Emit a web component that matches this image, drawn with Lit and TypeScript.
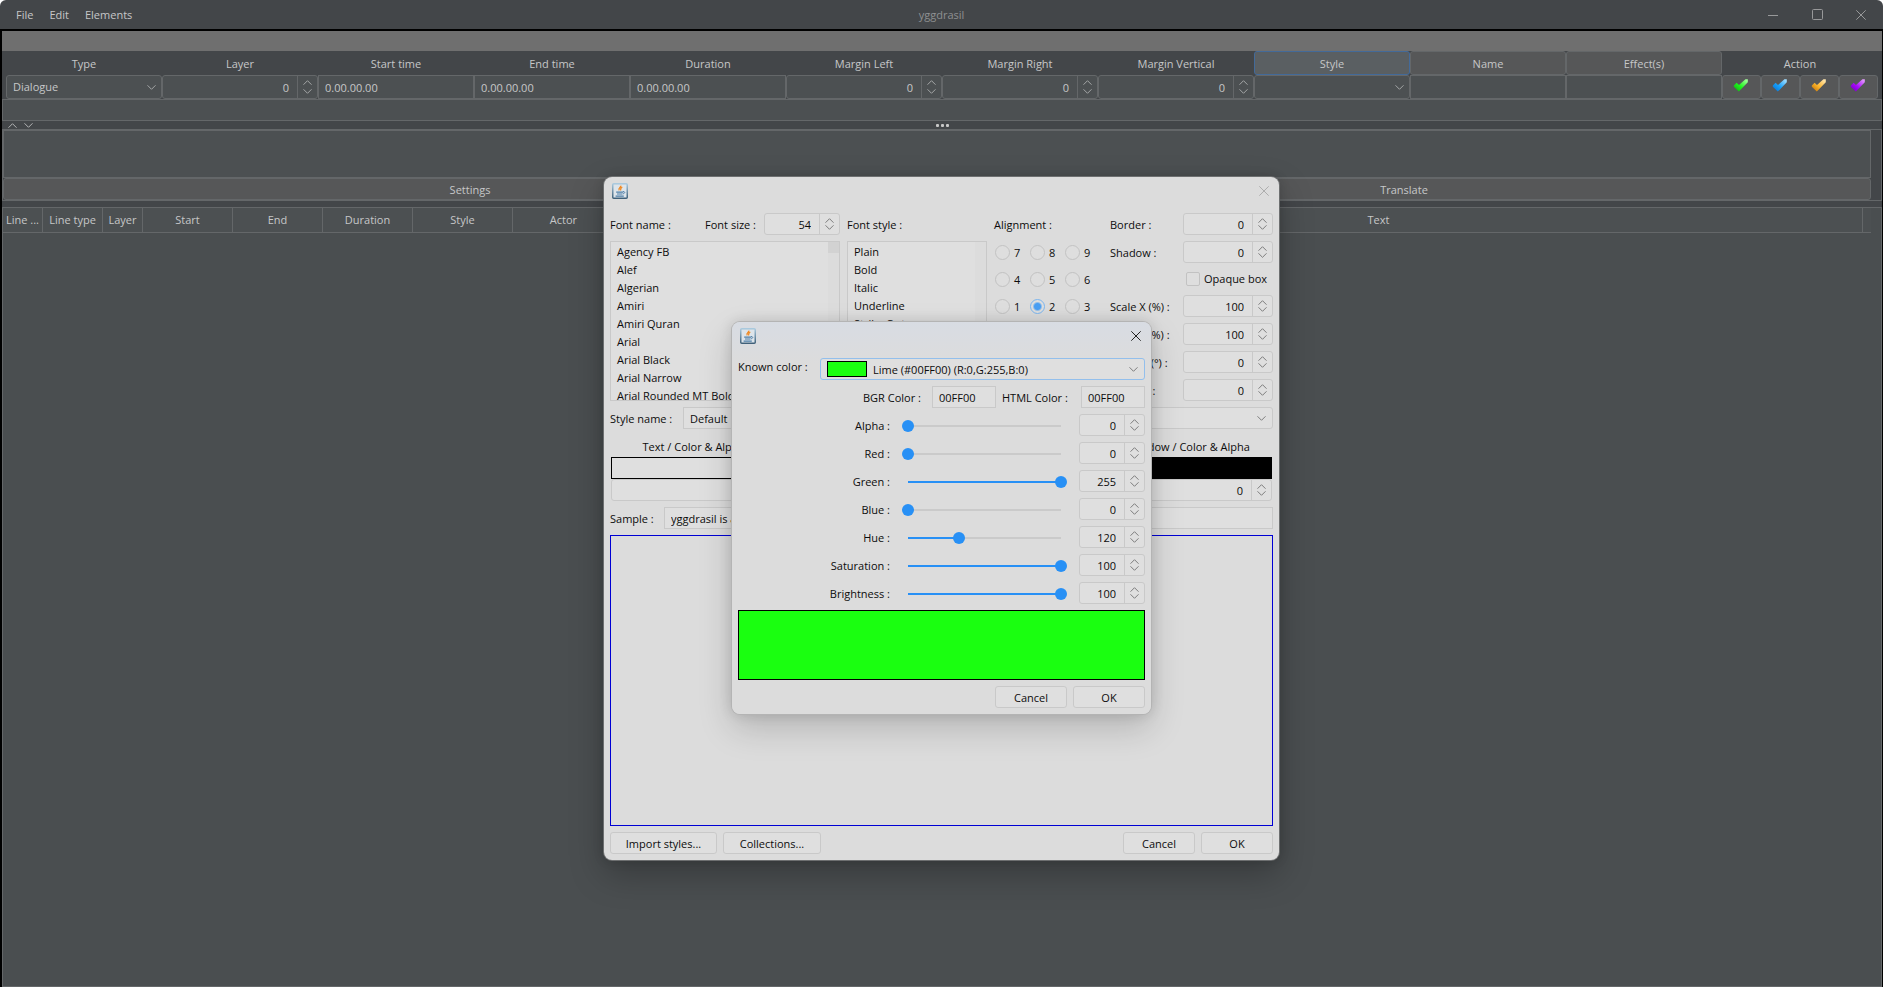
import { LitElement, html, css, nothing } from "lit";
import { customElement } from "lit/decorators.js";
import { styleMap } from "lit/directives/style-map.js";

const controls = css`
  :host {
    display: block;
    font: 11px/22px "Open Sans", "Noto Sans", sans-serif;
    color: var(--text);
    --h: 22px;
  }
  * {
    box-sizing: border-box;
  }
  button,
  input,
  select,
  textarea {
    font: inherit;
    color: inherit;
    margin: 0;
    padding: 0;
    border: 0;
    border-radius: 0;
    background: none;
    outline: none;
    min-width: 0;
  }
  svg {
    display: block;
    fill: none;
    stroke: currentColor;
  }
  .field {
    height: var(--h);
    border: 1px solid var(--line);
    background: var(--field);
    width: 100%;
    padding: var(--drop, 0) 6px 0;
  }
  .spin {
    display: flex;
    height: var(--h);
    border: 1px solid var(--line);
    border-radius: 3px;
    background: var(--field);
  }
  .spin input {
    flex: 1;
    width: 0;
    text-align: right;
    padding: var(--drop, 0) 8px 0 0;
    appearance: textfield;
  }
  .spin input::-webkit-inner-spin-button {
    appearance: none;
    display: none;
  }
  .arrows {
    width: 20px;
    border-left: 1px solid var(--line);
    display: flex;
    flex-direction: column;
    justify-content: center;
    align-items: stretch;
    gap: var(--arrow-gap);
    color: var(--glyph);
  }
  .arrows button {
    display: flex;
    justify-content: center;
  }
  .combo {
    display: flex;
    align-items: center;
    height: var(--h);
    border: 1px solid var(--line);
    border-radius: 3px;
    background: var(--field);
    padding: 0 6px;
    position: relative;
  }
  .combo select {
    appearance: none;
    flex: 1;
    width: 0;
    height: 100%;
  }
  .combo svg {
    color: var(--glyph);
    pointer-events: none;
  }
  .push {
    height: 22px;
    line-height: 20px;
    padding-top: var(--drop, 0);
    border: 1px solid var(--line);
    border-radius: 3px;
    background: var(--field);
    text-align: center;
  }
`;

const dialogFrame = css`
  :host {
    --text: #0c0c0c;
    --line: #c9c9c9;
    --field: #dfdfdf;
    --glyph: #7c7c7c;
    --arrow-gap: 2px;
    --drop: 1px;
  }
  .dialog {
    display: flex;
    flex-direction: column;
    background: #dcdcdc;
    border-radius: 8px;
    overflow: hidden;
  }
  .head {
    display: flex;
    justify-content: space-between;
    align-items: flex-start;
    height: 36px;
    padding: 6px 10px 0 8px;
  }
  .head button {
    padding: 3px 0;
  }
  .body {
    display: flex;
    flex-direction: column;
    gap: 6px;
    padding: 0 6px 6px;
  }
  .row {
    display: flex;
    align-items: center;
  }
  label {
    height: 22px;
    line-height: 24px;
  }
  .ok {
    width: 72px;
  }
`;

const up = html`<svg width="9" height="5" viewBox="0 0 9 5"><path d="M.5 4.7 4.5.7l4 4" /></svg>`;
const down = html`<svg width="9" height="5" viewBox="0 0 9 5"><path d="M.5.3l4 4 4-4" /></svg>`;
const cross = html`<svg width="10" height="10" viewBox="0 0 10 10"><path d="M.3.3l9.4 9.4M9.7.3.3 9.7" /></svg>`;

const spinner = (id: string, value: number, label?: string) => html`<div class="spin">
  <input type="number" id=${id} .value=${String(value)} aria-label=${label ?? nothing} />
  <div class="arrows">
    <button type="button" aria-label="Increase" tabindex="-1">${up}</button>
    <button type="button" aria-label="Decrease" tabindex="-1">${down}</button>
  </div>
</div>`;

const javaIcon = html`<svg width="16" height="16" viewBox="0 0 16 16" aria-hidden="true">
  <defs>
    <linearGradient id="edge" x1="0" y1="0" x2="0" y2="1">
      <stop offset="0" stop-color="#a9c9de" />
      <stop offset="1" stop-color="#3f6079" />
    </linearGradient>
  </defs>
  <rect x=".75" y=".75" width="14.5" height="14.5" rx="1" fill="#dde4ea" stroke="url(#edge)" stroke-width="1.5" />
  <path d="M8.8 2.6c.6 1.8-3 2.4-1.6 4.8M10.3 4.2C8.2 5 8.6 6 8.6 7.6" stroke="#f08a24" stroke-width="1.3" />
  <path d="M4.2 9.2h7M5 11h5.4M3.6 13.2h8.2" stroke="#4f7fa8" stroke-width="1.2" />
  <path d="M11 8.6c2.4-.4 2.2 2-.2 2.2" stroke="#4f7fa8" />
</svg>`;

@customElement("style-dialog")
export class StyleDialog extends LitElement {
  static styles = [
    controls,
    dialogFrame,
    css`
      .dialog {
        box-shadow: 0 0 0 1px #6d6f70, 0 14px 34px rgba(0, 0, 0, 0.26), 0 0 12px rgba(0, 0, 0, 0.16);
      }
      .head button {
        color: #adadad;
      }
      .top {
        display: grid;
        grid-template-columns: 230px 140px 109px 1fr;
        gap: 7px;
      }
      .col {
        display: flex;
        flex-direction: column;
        gap: 6px;
      }
      .name {
        gap: 8px;
      }
      .name label:first-child {
        margin-right: auto;
      }
      .name .spin {
        width: 76px;
      }
      .list {
        display: flex;
        height: 160px;
        border: 1px solid var(--line);
        background: var(--field);
        overflow: hidden;
      }
      .list select {
        flex: 1;
        height: 164px;
        padding: 2px 0 0;
        overflow: hidden;
      }
      .list option {
        font: 11px/18px "Open Sans", "Noto Sans", sans-serif;
        height: 18px;
        min-height: 18px;
        padding: 0 6px;
      }
      .gutter {
        width: 11px;
        background: #dcdcdc;
      }
      .thumb {
        display: block;
        height: 11px;
        background: #d2d2d2;
      }
      fieldset {
        border: 0;
        margin: 0;
        padding: 0;
        min-width: 0;
      }
      legend {
        padding: 0;
        height: 26px;
        line-height: 24px;
      }
      .pad {
        display: grid;
        grid-template-columns: repeat(3, 35px);
        grid-auto-rows: 27px;
        align-items: center;
        padding-left: 1px;
      }
      .pad label,
      .check {
        display: flex;
        align-items: center;
        gap: 4px;
      }
      input[type="radio"],
      input[type="checkbox"] {
        appearance: none;
        flex: none;
        width: 15px;
        height: 15px;
        border: 1px solid #c2c2c2;
        border-radius: 50%;
        background: #dedede;
      }
      input[type="radio"]:checked {
        border-color: #7cb6ef;
        background: radial-gradient(circle, #4a9ff3 3px, #dedede 5px);
      }
      input[type="checkbox"] {
        width: 14px;
        height: 14px;
        border-radius: 2px;
      }
      .nums {
        display: grid;
        grid-template-columns: 1fr 90px;
        row-gap: 6px;
      }
      .check {
        grid-column: 1 / -1;
        height: 20px;
        padding-left: 76px;
      }
      .combo-row label {
        width: 73px;
      }
      .combo-row .field {
        flex: 1;
        border-right: 0;
      }
      .combo-row .combo {
        width: 300px;
        border-radius: 0 3px 3px 0;
      }
      .sample label {
        width: 54px;
      }
      .sample .field {
        flex: 1;
      }
      .colors {
        display: grid;
        grid-template-columns: repeat(4, 1fr);
        padding: 0 1px;
      }
      .colors span {
        display: block;
        height: 22px;
        line-height: 24px;
        text-align: center;
      }
      .chip {
        display: block;
        width: 100%;
        height: 22px;
        border: 1px solid #000;
      }
      .preview {
        height: 291px;
        border: 1px solid #0000d4;
      }
      .buttons {
        gap: 6px;
      }
      .import {
        width: 107px;
      }
      .collect {
        width: 98px;
        margin-right: auto;
      }
    `,
  ];

  fonts = ["Agency FB", "Alef", "Algerian", "Amiri", "Amiri Quran", "Arial", "Arial Black", "Arial Narrow", "Arial Rounded MT Bold"];
  faces = ["Plain", "Bold", "Italic", "Underline", "Strike Out"];
  chips: [string, string][] = [
    ["Text", "#dfdfdf"],
    ["Karaoke", "#dfdf00"],
    ["Outline", "#000"],
    ["Shadow", "#000"],
  ];

  num(id: string, label: string, value: number) {
    return html`<label for=${id}>${label}</label>${spinner(id, value)}`;
  }

  render() {
    return html`<section class="dialog" role="dialog" aria-label="Style">
      <header class="head">${javaIcon}<button aria-label="Close">${cross}</button></header>
      <div class="body">
        <div class="top">
          <div class="col">
            <div class="row name">
              <label for="fontname">Font name :</label>
              <label for="fontsize">Font size :</label>
              ${spinner("fontsize", 54)}
            </div>
            <div class="list">
              <select id="fontname" size="9">
                ${this.fonts.map((f) => html`<option>${f}</option>`)}
              </select>
              <div class="gutter"><span class="thumb"></span></div>
            </div>
          </div>
          <div class="col">
            <label for="face">Font style :</label>
            <div class="list">
              <select id="face" size="9">
                ${this.faces.map((f) => html`<option>${f}</option>`)}
              </select>
              <div class="gutter"></div>
            </div>
          </div>
          <fieldset>
            <legend>Alignment :</legend>
            <div class="pad">
              ${[7, 8, 9, 4, 5, 6, 1, 2, 3].map(
                (n) => html`<label><input type="radio" name="align" ?checked=${n === 2} />${n}</label>`
              )}
            </div>
          </fieldset>
          <div class="nums">
            ${this.num("border", "Border :", 0)} ${this.num("shadow", "Shadow :", 0)}
            <label class="check"><input type="checkbox" />Opaque box</label>
            ${this.num("sx", "Scale X (%) :", 100)} ${this.num("sy", "Scale Y (%) :", 100)}
            ${this.num("angle", "Angle Z (°) :", 0)} ${this.num("spacing", "Spacing :", 0)}
          </div>
        </div>
        <div class="row combo-row">
          <label for="stylename">Style name :</label>
          <input class="field" id="stylename" .value=${"Default"} />
          <div class="combo">
            <select aria-label="Encoding"><option></option></select>${down}
          </div>
        </div>
        <div class="colors">
          ${this.chips.map(
            ([name, color]) => html`<div>
              <span>${name} / Color &amp; Alpha</span>
              <button class="chip" aria-label=${name} style=${styleMap({ background: color })}></button>
              ${spinner(name, 0, name + " alpha")}
            </div>`
          )}
        </div>
        <div class="row sample">
          <label for="sample">Sample :</label>
          <input class="field" id="sample" .value=${"yggdrasil is an ASS editor"} />
        </div>
        <div class="preview"></div>
        <div class="row buttons">
          <button class="push import">Import styles...</button>
          <button class="push collect">Collections...</button>
          <button class="push ok">Cancel</button>
          <button class="push ok">OK</button>
        </div>
      </div>
    </section>`;
  }
}

@customElement("color-dialog")
export class ColorDialog extends LitElement {
  static styles = [
    controls,
    dialogFrame,
    css`
      .dialog {
        background: linear-gradient(#d8dce3, #dcdcdc 42px);
        box-shadow: 0 0 0 1px #b4b4b4, 0 14px 34px rgba(0, 0, 0, 0.18), 0 0 14px rgba(0, 0, 0, 0.14);
      }
      .head button {
        color: #222;
      }
      .known label {
        width: 82px;
        line-height: 18px;
      }
      .known .combo {
        flex: 1;
        border-color: #93bfec;
      }
      .swatch {
        width: 40px;
        height: 16px;
        margin-right: 6px;
        border: 1px solid #000;
        background: #1aff10;
      }
      .hex {
        justify-content: flex-end;
      }
      .hex label {
        width: 69px;
      }
      .hex .html {
        width: 79px;
        margin-left: 6px;
      }
      .hex .field {
        width: 64px;
      }
      .channel {
        display: grid;
        grid-template-columns: 1fr 165px 66px;
        column-gap: 12px;
        text-align: right;
      }
      input[type="range"] {
        appearance: none;
        width: 100%;
        height: 22px;
        margin-top: 1px;
        background: linear-gradient(to right, #2890f5 var(--fill), #cacaca var(--fill)) center / calc(100% - 12px) 2px
          no-repeat;
      }
      input[type="range"]::-webkit-slider-thumb {
        appearance: none;
        width: 12px;
        height: 12px;
        border-radius: 50%;
        background: #2890f5;
      }
      .channel {
        height: 22px;
      }
      .result {
        height: 70px;
        border: 1px solid #000;
        background: #1aff10;
      }
      .buttons {
        justify-content: flex-end;
        gap: 6px;
      }
    `,
  ];

  channels: [string, number, number][] = [
    ["Alpha", 0, 255],
    ["Red", 0, 255],
    ["Green", 255, 255],
    ["Blue", 0, 255],
    ["Hue", 120, 360],
    ["Saturation", 100, 100],
    ["Brightness", 100, 100],
  ];

  render() {
    return html`<section class="dialog" role="dialog" aria-label="Color">
      <header class="head">${javaIcon}<button aria-label="Close">${cross}</button></header>
      <div class="body">
        <div class="row known">
          <label for="known">Known color :</label>
          <div class="combo">
            <span class="swatch"></span>
            <select id="known">
              <option>Lime (#00FF00) (R:0,G:255,B:0)</option>
            </select>
            ${down}
          </div>
        </div>
        <div class="row hex">
          <label for="bgr">BGR Color :</label><input class="field" id="bgr" .value=${"00FF00"} />
          <label class="html" for="htmlc">HTML Color :</label><input class="field" id="htmlc" .value=${"00FF00"} />
        </div>
        ${this.channels.map(
          ([name, value, max]) => html`<div class="channel">
            <label for=${name}>${name} :</label>
            <input
              type="range"
              id=${name}
              min="0"
              max=${max}
              .value=${String(value)}
              style=${styleMap({ "--fill": (value / max) * 100 + "%" })}
            />
            ${spinner(name + "-value", value, name)}
          </div>`
        )}
        <div class="result"></div>
        <div class="row buttons">
          <button class="push ok">Cancel</button>
          <button class="push ok">OK</button>
        </div>
      </div>
    </section>`;
  }
}

const TICKS = [
  ["green", "#12b512", "#1df51d", "#a5ff9c"],
  ["blue", "#0878d8", "#18a0fa", "#a6e0ff"],
  ["orange", "#c8790c", "#fbb32a", "#ffe8b4"],
  ["purple", "#7a00c4", "#a80bfa", "#e6a0ff"],
];

@customElement("app-root")
export class AppRoot extends LitElement {
  static styles = [
    controls,
    css`
      :host {
        --text: #c6c7c8;
        --line: #646769;
        --field: #4c5052;
        --glyph: #a4a6a7;
        --arrow-gap: 4px;
        height: 100vh;
        position: relative;
        overflow: hidden;
      }
      .window {
        display: flex;
        flex-direction: column;
        height: 100%;
        background: #434649;
        border-radius: 6px 6px 0 0;
        overflow: hidden;
      }
      .title {
        display: grid;
        grid-template-columns: 1fr auto 1fr;
        align-items: center;
        height: 29px;
        line-height: 26px;
      }
      .title nav {
        padding-left: 8px;
      }
      .title nav button {
        padding: 0 8px;
      }
      .caption {
        color: #8e9091;
      }
      .sys {
        display: flex;
        justify-content: flex-end;
        color: #98999a;
      }
      .sys button {
        width: 44px;
        height: 26px;
        display: flex;
        align-items: center;
        justify-content: center;
      }
      .frame {
        flex: 1;
        min-height: 0;
        display: flex;
        flex-direction: column;
        border: solid #000;
        border-width: 2px 1px 0 2px;
      }
      .band {
        height: 20px;
        background: #6f6f6f;
      }
      .grid {
        display: grid;
        grid-template-columns: repeat(12, 1fr);
        grid-template-rows: 24px 24px;
        padding: 0 4px;
        text-align: center;
        line-height: 25px;
        --h: 24px;
      }
      .grid .field,
      .grid .combo {
        line-height: 22px;
      }
      .grid .combo {
        padding: 0 5px 0 6px;
      }
      .tab {
        background: #565758;
        border: 1px solid var(--line);
        border-radius: 3px;
        padding-top: 1px;
      }
      .grid .tab {
        line-height: 22px;
      }
      .tab.active {
        background: #5a5f62;
        border-color: #436a99;
      }
      .actions {
        display: grid;
        grid-template-columns: repeat(4, 1fr);
      }
      .actions button {
        display: flex;
        justify-content: center;
        padding: 2px 1px 0 0;
      }
      .line {
        height: 22px;
        border: 1px solid var(--line);
        background: var(--field);
      }
      .split {
        display: grid;
        grid-template-columns: 1fr auto 1fr;
        align-items: center;
        height: 8px;
        color: #b4b5b6;
      }
      .folds {
        display: flex;
        gap: 7px;
        padding-left: 6px;
      }
      .dots {
        display: flex;
        gap: 2px;
      }
      .dots i {
        width: 3px;
        height: 3px;
        border-radius: 1px;
        background: #c8c8c8;
      }
      .editor {
        display: grid;
        grid-template-columns: 1fr 1fr 10px;
        border: 1px solid var(--line);
        margin-bottom: 6px;
      }
      .editor textarea {
        display: block;
        grid-column: 1 / 3;
        width: 100%;
        height: 48px;
        resize: none;
        border: 1px solid var(--line);
        background: var(--field);
      }
      .editor .tab {
        grid-row: 2;
        height: 22px;
        line-height: 20px;
      }
      .events {
        flex: 1;
        border: 1px solid var(--line);
        background: #4a4e50;
        padding-right: 10px;
      }
      table {
        width: 100%;
        table-layout: fixed;
        border-collapse: separate;
        border-spacing: 0;
      }
      th {
        height: 25px;
        padding: 0;
        font-weight: 400;
        line-height: 24px;
        border: solid var(--line);
        border-width: 0 1px 1px 0;
        background: var(--field);
        white-space: nowrap;
      }
      th:last-child {
        border-right: 0;
      }
      .style-window {
        position: absolute;
        left: 604px;
        top: 177px;
        width: 675px;
      }
      .color-window {
        position: absolute;
        left: 732px;
        top: 322px;
        width: 419px;
      }
    `,
  ];

  columns: [string, number | null][] = [
    ["Line ...", 40],
    ["Line type", 60],
    ["Layer", 40],
    ["Start", 90],
    ["End", 90],
    ["Duration", 90],
    ["Style", 100],
    ["Actor", 102],
    ["", 280],
    ["Text", null],
    ["", 8],
  ];

  tick([name, dark, mid, light]: string[]) {
    return html`<button class="tab" aria-label=${name}>
      <svg width="16" height="16" viewBox="0 0 16 16">
        <defs>
          <linearGradient id=${"t-" + name} x1="0" y1="1" x2="1" y2="0">
            <stop offset=".1" stop-color=${dark} />
            <stop offset=".45" stop-color=${mid} />
            <stop offset=".95" stop-color=${light} />
          </linearGradient>
        </defs>
        <path d="M.8 7.4 3.6 4.8 6 7l6.4-5.8h2.4v3L5.8 13.6.8 8.8z" fill=${`url(#t-${name})`} stroke="none" />
      </svg>
    </button>`;
  }

  render() {
    return html`
      <div class="window">
        <header class="title">
          <nav><button>File</button><button>Edit</button><button>Elements</button></nav>
          <span class="caption">yggdrasil</span>
          <div class="sys">
            <button aria-label="Minimize"><svg width="10" height="10" viewBox="0 0 10 10"><path d="M0 5.5h10" /></svg></button>
            <button aria-label="Maximize">
              <svg width="11" height="11" viewBox="0 0 11 11"><rect x=".5" y=".5" width="10" height="10" rx="1" /></svg>
            </button>
            <button aria-label="Close">${cross}</button>
          </div>
        </header>
        <main class="frame">
          <div class="band"></div>
          <div class="grid">
            <label for="type">Type</label>
            <label for="layer">Layer</label>
            <label for="start">Start time</label>
            <label for="end">End time</label>
            <label for="duration">Duration</label>
            <label for="ml">Margin Left</label>
            <label for="mr">Margin Right</label>
            <label for="mv">Margin Vertical</label>
            <button class="tab active">Style</button>
            <button class="tab">Name</button>
            <button class="tab">Effect(s)</button>
            <span>Action</span>
            <div class="combo">
              <select id="type"><option>Dialogue</option></select>${down}
            </div>
            ${spinner("layer", 0)}
            ${["start", "end", "duration"].map((id) => html`<input class="field" id=${id} .value=${"0.00.00.00"} />`)}
            ${["ml", "mr", "mv"].map((id) => spinner(id, 0))}
            <div class="combo">
              <select aria-label="Style"><option></option></select>${down}
            </div>
            <input class="field" aria-label="Name" />
            <input class="field" aria-label="Effects" />
            <div class="actions">${TICKS.map((t) => this.tick(t))}</div>
          </div>
          <div class="line"></div>
          <div class="split">
            <div class="folds">
              <button aria-label="Collapse">${up}</button><button aria-label="Expand">${down}</button>
            </div>
            <div class="dots"><i></i><i></i><i></i></div>
          </div>
          <div class="editor">
            <textarea aria-label="Text"></textarea>
            <button class="tab">Settings</button>
            <button class="tab">Translate</button>
          </div>
          <div class="events">
            <table>
              <colgroup>
                ${this.columns.map(([, w]) => html`<col style=${styleMap(w ? { width: w + "px" } : {})} />`)}
              </colgroup>
              <thead>
                <tr>
                  ${this.columns.map(([name]) => html`<th>${name}</th>`)}
                </tr>
              </thead>
            </table>
          </div>
        </main>
      </div>
      <style-dialog class="style-window"></style-dialog>
      <color-dialog class="color-window"></color-dialog>
    `;
  }
}
